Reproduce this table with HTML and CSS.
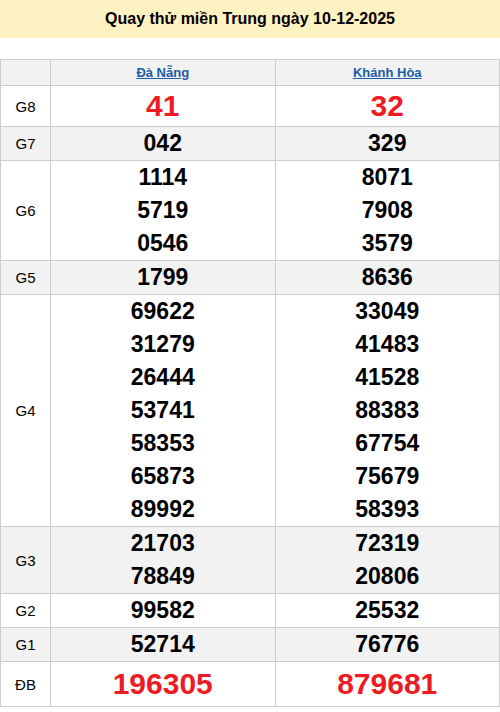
FILE: index.html
```html
<!DOCTYPE html>
<html lang="vi">
<head>
<meta charset="utf-8">
<title>Quay thử miền Trung</title>
<link rel="stylesheet" href="styles.css">
</head>
<body>
<div class="title">Quay thử miền Trung ngày 10-12-2025</div>
<table class="kq">
  <colgroup><col class="c-label"><col class="c-prov"><col class="c-prov"></colgroup>
  <thead>
    <tr><th></th><th><a href="#">Đà Nẵng</a></th><th><a href="#">Khánh Hòa</a></th></tr>
  </thead>
  <tbody>
    <tr class="g8"><td class="lbl">G8</td><td class="num red big">41</td><td class="num red big">32</td></tr>
    <tr class="alt"><td class="lbl">G7</td><td class="num">042</td><td class="num">329</td></tr>
    <tr><td class="lbl">G6</td><td class="num"><div>1114</div><div>5719</div><div>0546</div></td><td class="num"><div>8071</div><div>7908</div><div>3579</div></td></tr>
    <tr class="alt"><td class="lbl">G5</td><td class="num">1799</td><td class="num">8636</td></tr>
    <tr><td class="lbl">G4</td><td class="num"><div>69622</div><div>31279</div><div>26444</div><div>53741</div><div>58353</div><div>65873</div><div>89992</div></td><td class="num"><div>33049</div><div>41483</div><div>41528</div><div>88383</div><div>67754</div><div>75679</div><div>58393</div></td></tr>
    <tr class="alt"><td class="lbl">G3</td><td class="num"><div>21703</div><div>78849</div></td><td class="num"><div>72319</div><div>20806</div></td></tr>
    <tr><td class="lbl">G2</td><td class="num">99582</td><td class="num">25532</td></tr>
    <tr class="alt"><td class="lbl">G1</td><td class="num">52714</td><td class="num">76776</td></tr>
    <tr class="db"><td class="lbl">ĐB</td><td class="num red huge">196305</td><td class="num red huge">879681</td></tr>
  </tbody>
</table>
</body>
</html>
```
FILE: styles.css
```css
html, body {
  margin: 0;
  padding: 0;
  background: #fff;
}
body {
  font-family: "Liberation Sans", Arial, sans-serif;
  color: #000;
}
.title {
  background: #fff2c2;
  height: 38px;
  line-height: 38px;
  text-align: center;
  font-weight: bold;
  font-size: 16px;
  margin-bottom: 21px;
}
.kq {
  width: 100%;
  border-collapse: collapse;
  table-layout: fixed;
}
.c-label { width: 50px; }
.kq th, .kq td {
  border: 1px solid #cccccc;
  padding: 0;
  text-align: center;
  vertical-align: middle;
}
.kq th {
  background: #f2f2f2;
  height: 25px;
  line-height: 25px;
  font-size: 13px;
  font-weight: bold;
}
.kq th a {
  color: #1a5ca8;
  text-decoration: underline;
}
.lbl {
  font-size: 15px;
  color: #000;
}
.num {
  font-size: 23px;
  font-weight: bold;
  line-height: 33px;
}
.alt td { background: #f2f2f2; }
.red { color: #ed1c24; }
.big {
  font-size: 30px;
  line-height: 40px;
}
.huge {
  font-size: 30px;
  line-height: 44px;
}
```
